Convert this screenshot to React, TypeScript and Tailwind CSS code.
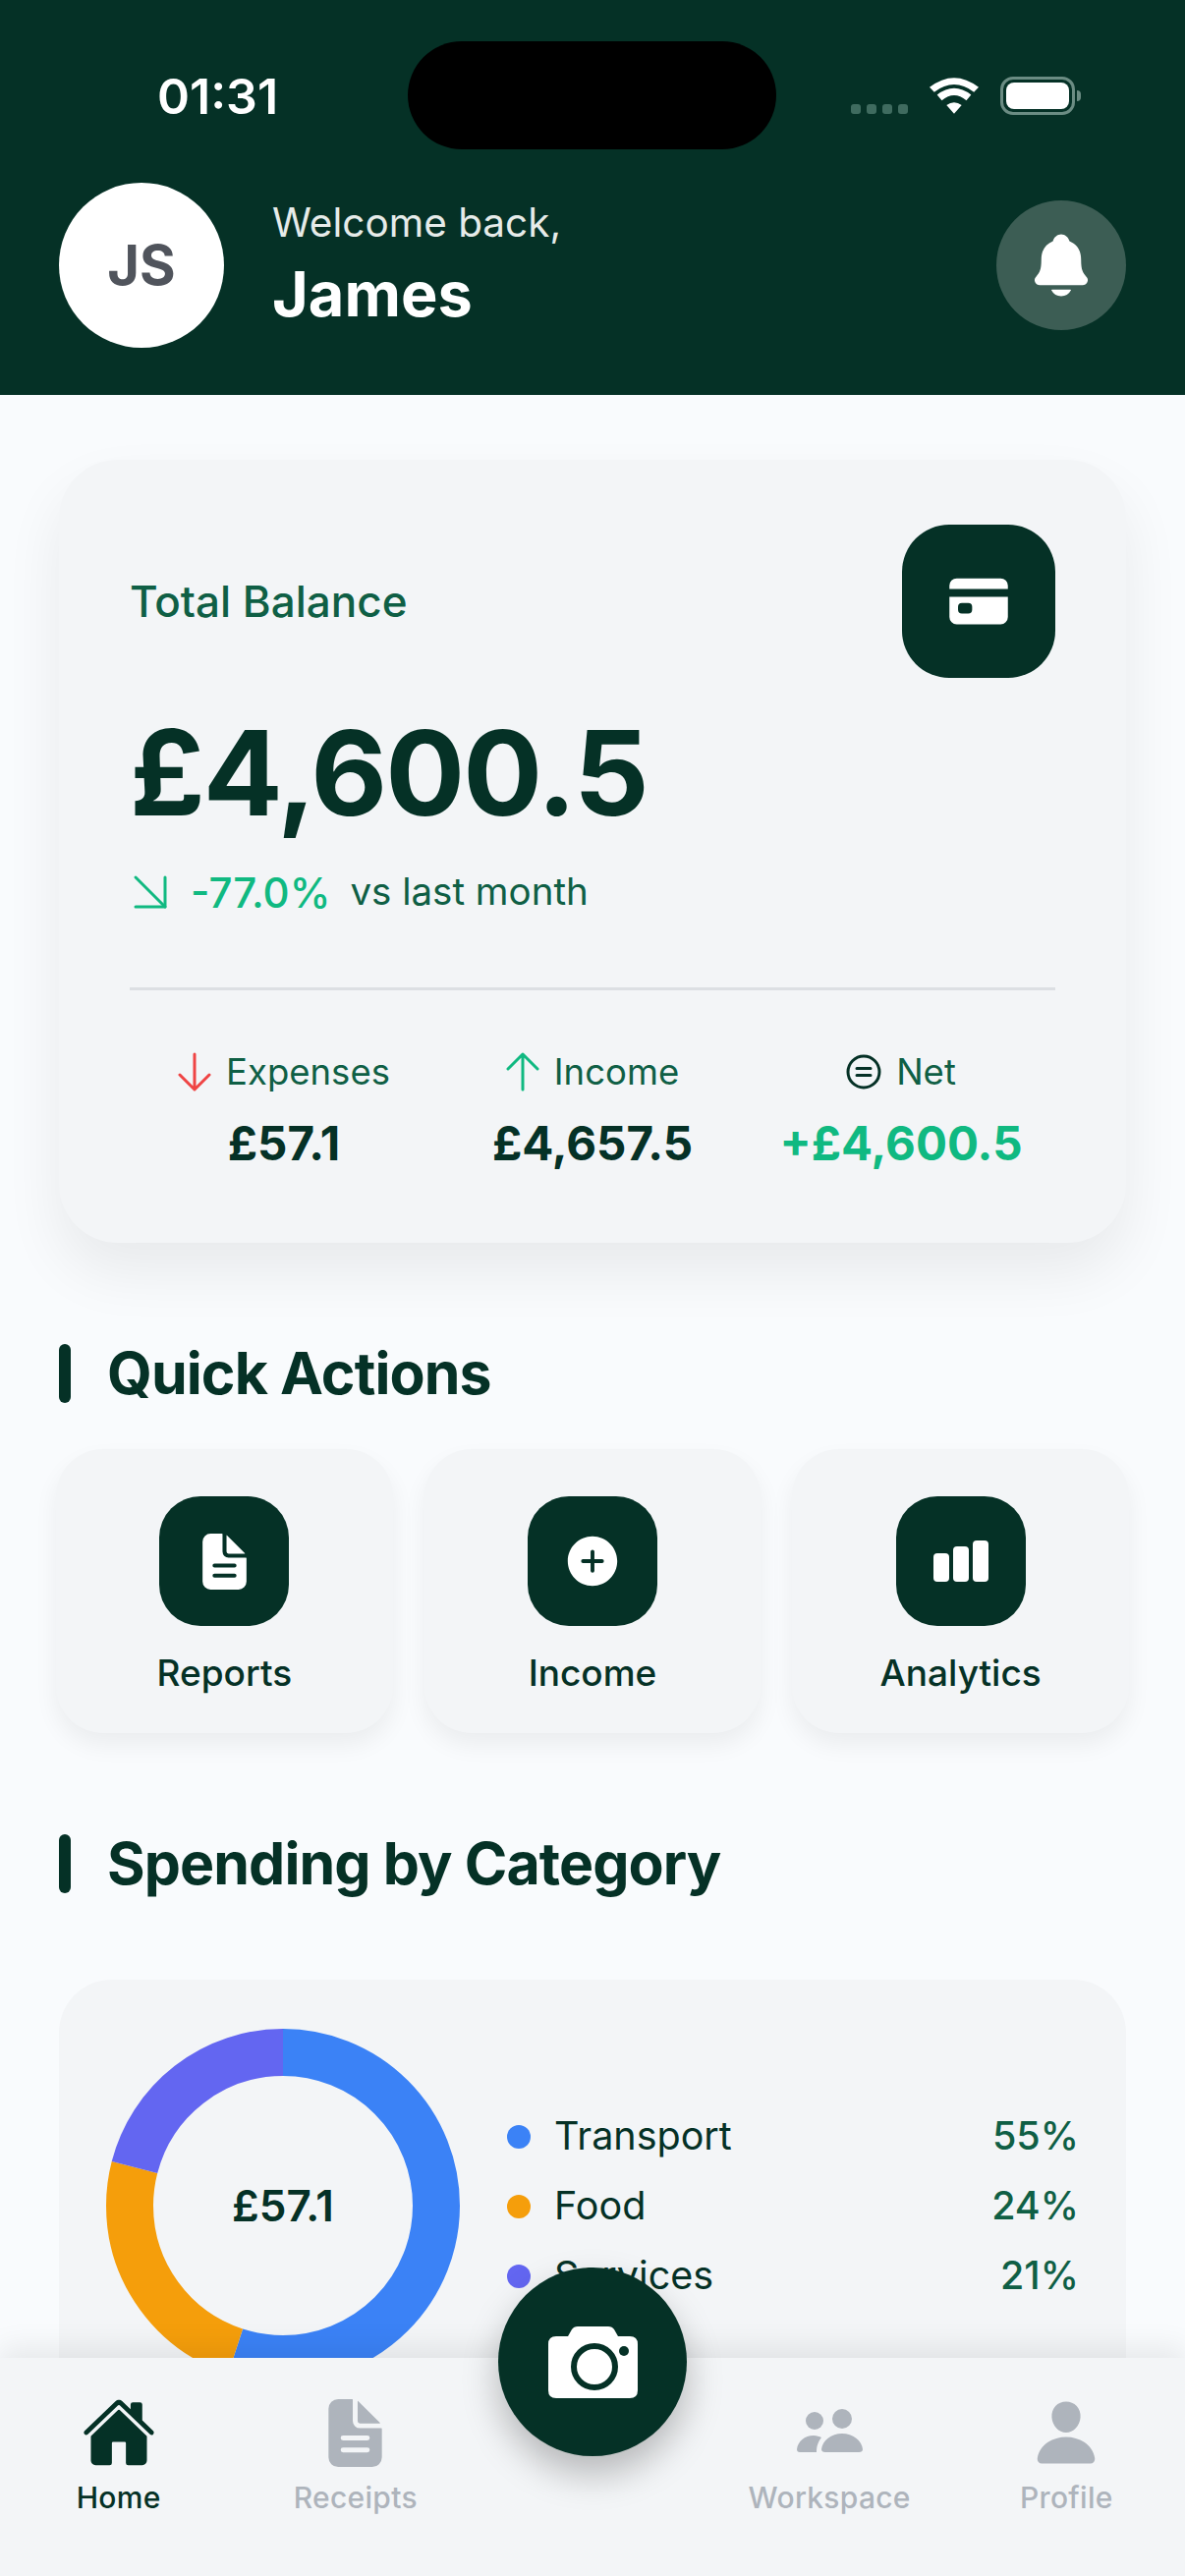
import { ArrowDownRight } from 'lucide-react';
import { IoAddCircle, IoCard, IoDocumentText, IoHome, IoNotifications, IoPerson } from 'react-icons/io5';

const legend = [
  { name: 'Transport', pct: '55%', dot: 'bg-[#3b82f6]' },
  { name: 'Food', pct: '24%', dot: 'bg-[#f59e0b]' },
  { name: 'Services', pct: '21%', dot: 'bg-[#6366f1]' },
];

const ChartBars = () => (
  <svg width="56" height="42" viewBox="0 0 56 42" fill="#fff">
    <rect x="0" y="13" width="16" height="29" rx="4" />
    <rect x="20" y="6" width="16" height="36" rx="4" />
    <rect x="40" y="0" width="16" height="42" rx="4" />
  </svg>
);

const PeopleIcon = () => (
  <svg width="67" height="44" viewBox="0 0 67 44" fill="currentColor" className="mb-[4px]">
    <circle cx="18" cy="12" r="9" />
    <circle cx="46" cy="10" r="10" />
    <path d="M29 44 Q25 44 25 41 C26 32 35 25 46 25 C57 25 66 32 67 41 Q67 44 63 44 Z" />
    <path d="M3 44 Q0 44 0 41 C1 33 8 27 17 27 C20 27 23 28 25 29 C22 33 20 37 20 44 Z" />
  </svg>
);

const CameraIcon = () => (
  <svg width="91" height="73" viewBox="0 0 91 73">
    <path
      fill="#fff"
      d="M8 10 H20 L24 3 Q26 0 30 0 H61 Q65 0 67 3 L71 10 H83 Q91 10 91 18 V65 Q91 73 83 73 H8 Q0 73 0 65 V18 Q0 10 8 10 Z"
    />
    <circle cx="47" cy="41" r="21" fill="none" stroke="#053126" strokeWidth="6" />
    <circle cx="77" cy="25" r="5" fill="#053126" />
  </svg>
);

const actions = [
  { label: 'Reports', icon: <IoDocumentText size={65} /> },
  { label: 'Income', icon: <IoAddCircle size={62} /> },
  { label: 'Analytics', icon: <ChartBars /> },
];

const tabs = [
  { label: 'Home', icon: <IoHome size={76} />, active: true },
  { label: 'Receipts', icon: <IoDocumentText size={79} />, active: false },
  { label: '', icon: null, active: false },
  { label: 'Workspace', icon: <PeopleIcon />, active: false },
  { label: 'Profile', icon: <IoPerson size={72} />, active: false },
];

// r=156, circumference 980.2
const segments = [
  { color: '#3b82f6', len: 539.1, offset: 0 },
  { color: '#f59e0b', len: 235.2, offset: -539.1 },
  { color: '#6366f1', len: 205.9, offset: -774.3 },
];

const SectionTitle = ({ title }: { title: string }) => (
  <div className="flex items-center gap-[37px]">
    <span className="w-[12px] h-[60px] rounded-full bg-[#053126]" />
    <h2 className="text-[59px] leading-[72px] font-bold text-[#053126] tracking-[-0.9px]">{title}</h2>
  </div>
);

const App = () => {
  return (
    <div className="relative flex flex-col w-[1206px] h-[2622px] overflow-hidden bg-[#f9fbfd] font-['Inter',sans-serif]">
      {/* Header */}
      <header className="relative h-[402px] shrink-0 bg-[#053126] px-[60px]">
        <div className="flex items-center justify-between h-[186px] pt-[11px] pl-[100px] pr-[46px]">
          <span className="text-[50px] font-semibold text-white">01:31</span>
          <div className="flex items-end gap-[22px] mb-[2px]">
            <div className="flex gap-[6px] mb-[1px]">
              {[0, 1, 2, 3].map((i) => (
                <span key={i} className="w-[10px] h-[10px] rounded-[3px] bg-[#3f6b5f]" />
              ))}
            </div>
            <svg width="50" height="37" viewBox="0 0 52 38" fill="#fff" className="mb-[1px]">
              <path d="M26 38 L18 29 Q26 23 34 29 Z" />
              <path d="M13 24 L8 18 Q26 4 44 18 L39 24 Q26 13 13 24 Z" />
              <path d="M5 15 L0 10 Q26 -10 52 10 L47 15 Q26 -1 5 15 Z" />
            </svg>
            <div className="flex items-center gap-[2px]">
              <div className="w-[76px] h-[39px] rounded-[13px] border-[3px] border-[#6b8c83] p-[3px]">
                <div className="w-full h-full rounded-[8px] bg-white" />
              </div>
              <span className="w-[4px] h-[11px] rounded-r-full bg-[#6b8c83]" />
            </div>
          </div>
        </div>
        <div className="absolute left-[415px] top-[42px] w-[375px] h-[110px] rounded-[55px] bg-black" />

        <div className="flex items-center justify-between">
          <div className="flex items-center gap-[49px]">
            <div className="flex items-center justify-center w-[168px] h-[168px] rounded-full bg-white text-[56px] font-bold text-[#50545c]">
              JS
            </div>
            <div className="flex flex-col">
              <span className="text-[40.5px] leading-[54px] -mt-[5px] text-[#e6ebe9]">Welcome back,</span>
              <span className="text-[63px] leading-[72px] mt-[9px] font-bold text-white">James</span>
            </div>
          </div>
          <div className="flex items-center justify-center w-[132px] h-[132px] rounded-full bg-[#3c5d54] text-white">
            <IoNotifications size={72} />
          </div>
        </div>
      </header>

      {/* Scroll content */}
      <main className="flex-1 min-h-0 overflow-hidden px-[60px] pt-[66px]">
        <section className="h-[797px] rounded-[60px] bg-[#f3f5f7] px-[72px] pt-[66px] shadow-[0_30px_60px_rgba(0,0,0,0.07)]">
          <div className="flex items-center justify-between h-[156px]">
            <span className="text-[44px] font-medium text-[#0f5f45]">Total Balance</span>
            <div className="flex items-center justify-center w-[156px] h-[156px] rounded-[48px] bg-[#053126] text-white">
              <IoCard size={68} />
            </div>
          </div>
          <div className="mt-[27px] text-[120px] leading-[140px] font-bold tracking-[-2px] text-[#053126]">£4,600.5</div>
          <div className="flex items-center mt-[26px] h-[50px] text-[38.5px]">
            <ArrowDownRight size={72} strokeWidth={1} className="shrink-0 text-[#10b981] -ml-[15px]" />
            <span className="ml-[5px] text-[42px] font-medium text-[#10b981]">-77.0%</span>
            <span className="ml-[20px] text-[#0f5f45]">vs last month</span>
          </div>
          <div className="h-[3px] mt-[72px] bg-[#dcdfe3]" />
          <div className="grid grid-cols-3 mt-[61px]">
            <div className="flex flex-col items-center">
              <div className="flex items-center gap-[15px] h-[44px] text-[36.5px] text-[#0f5f45]">
                <svg width="34" height="40" viewBox="0 0 34 40" fill="none" stroke="#ef4444" strokeWidth="3" strokeLinecap="round" strokeLinejoin="round">
                  <path d="M17 2V38M2 23L17 38L32 23" />
                </svg>
                Expenses
              </div>
              <span className="mt-[23px] text-[47.5px] leading-[56px] font-bold text-[#053126]">£57.1</span>
            </div>
            <div className="flex flex-col items-center">
              <div className="flex items-center gap-[15px] h-[44px] text-[36.5px] text-[#0f5f45]">
                <svg width="34" height="40" viewBox="0 0 34 40" fill="none" stroke="#10b981" strokeWidth="3" strokeLinecap="round" strokeLinejoin="round">
                  <path d="M17 38V2M2 17L17 2L32 17" />
                </svg>
                Income
              </div>
              <span className="mt-[23px] text-[47.5px] leading-[56px] font-bold text-[#053126]">£4,657.5</span>
            </div>
            <div className="flex flex-col items-center">
              <div className="flex items-center gap-[15px] h-[44px] text-[36.5px] text-[#0f5f45]">
                <svg width="36" height="36" viewBox="0 0 36 36" fill="none" stroke="#053126" strokeWidth="3">
                  <circle cx="18" cy="18" r="16" />
                  <path d="M11 14.5h14M11 21.5h14" strokeLinecap="round" />
                </svg>
                Net
              </div>
              <span className="mt-[23px] text-[47.5px] leading-[56px] font-bold text-[#10b981]">+£4,600.5</span>
            </div>
          </div>
        </section>

        <section className="mt-[97px]">
          <SectionTitle title="Quick Actions" />
          <div className="grid grid-cols-3 gap-[32px] mt-[41px] -mx-[3px]">
            {actions.map((a) => (
              <div
                key={a.label}
                className="flex flex-col items-center h-[289px] pt-[48px] rounded-[48px] bg-[#f3f5f7] shadow-[0_12px_24px_rgba(0,0,0,0.06)]"
              >
                <div className="flex items-center justify-center w-[132px] h-[132px] rounded-[42px] bg-[#053126] text-white">
                  {a.icon}
                </div>
                <span className="mt-[26px] text-[37px] leading-[44px] font-medium text-[#053126]">{a.label}</span>
              </div>
            ))}
          </div>
        </section>

        <section className="mt-[97px]">
          <SectionTitle title="Spending by Category" />
          <div className="flex items-start h-[500px] mt-[82px] pt-[50px] pl-[48px] pr-[48px] rounded-[54px] bg-[#f3f5f7]">
            <div className="relative shrink-0 w-[360px] h-[360px]">
              <svg width="360" height="360" viewBox="0 0 360 360" className="-rotate-90">
                {segments.map((s) => (
                  <circle
                    key={s.color}
                    cx="180"
                    cy="180"
                    r="156"
                    fill="none"
                    stroke={s.color}
                    strokeWidth="48"
                    strokeDasharray={`${s.len} 980.2`}
                    strokeDashoffset={s.offset}
                  />
                ))}
              </svg>
              <span className="absolute inset-0 flex items-center justify-center text-[44px] font-semibold text-[#053126]">
                £57.1
              </span>
            </div>
            <div className="flex flex-col gap-[27px] flex-1 ml-[48px] mt-[88px]">
              {legend.map((l) => (
                <div key={l.name} className="flex items-center h-[44px]">
                  <span className={`w-[24px] h-[24px] rounded-full ${l.dot}`} />
                  <span className="ml-[24px] text-[39.5px] text-[#053126]">{l.name}</span>
                  <span className="ml-auto text-[39.5px] font-medium text-[#0f5f45]">{l.pct}</span>
                </div>
              ))}
            </div>
          </div>
        </section>
      </main>

      {/* Tab bar */}
      <nav className="relative z-10 grid grid-cols-5 shrink-0 h-[222px] bg-[#f3f5f7] shadow-[0_-10px_28px_rgba(0,0,0,0.08)]">
        {tabs.map((t, i) => (
          <div
            key={i}
            className={`flex flex-col items-center pt-[40px] ${t.active ? 'text-[#053126]' : 'text-[#aeb4bc]'}`}
          >
            <div className="flex items-center justify-center h-[72px]">{t.icon}</div>
            <span className="mt-[11px] text-[30px] leading-[38px] font-medium tracking-[0.3px]">{t.label}</span>
          </div>
        ))}
        <button className="absolute left-[507px] -top-[92px] flex items-center justify-center w-[192px] h-[192px] rounded-full bg-[#053126] text-white shadow-[0_18px_36px_rgba(0,0,0,0.25)]">
          <CameraIcon />
        </button>
      </nav>
    </div>
  );
};

export default App;
